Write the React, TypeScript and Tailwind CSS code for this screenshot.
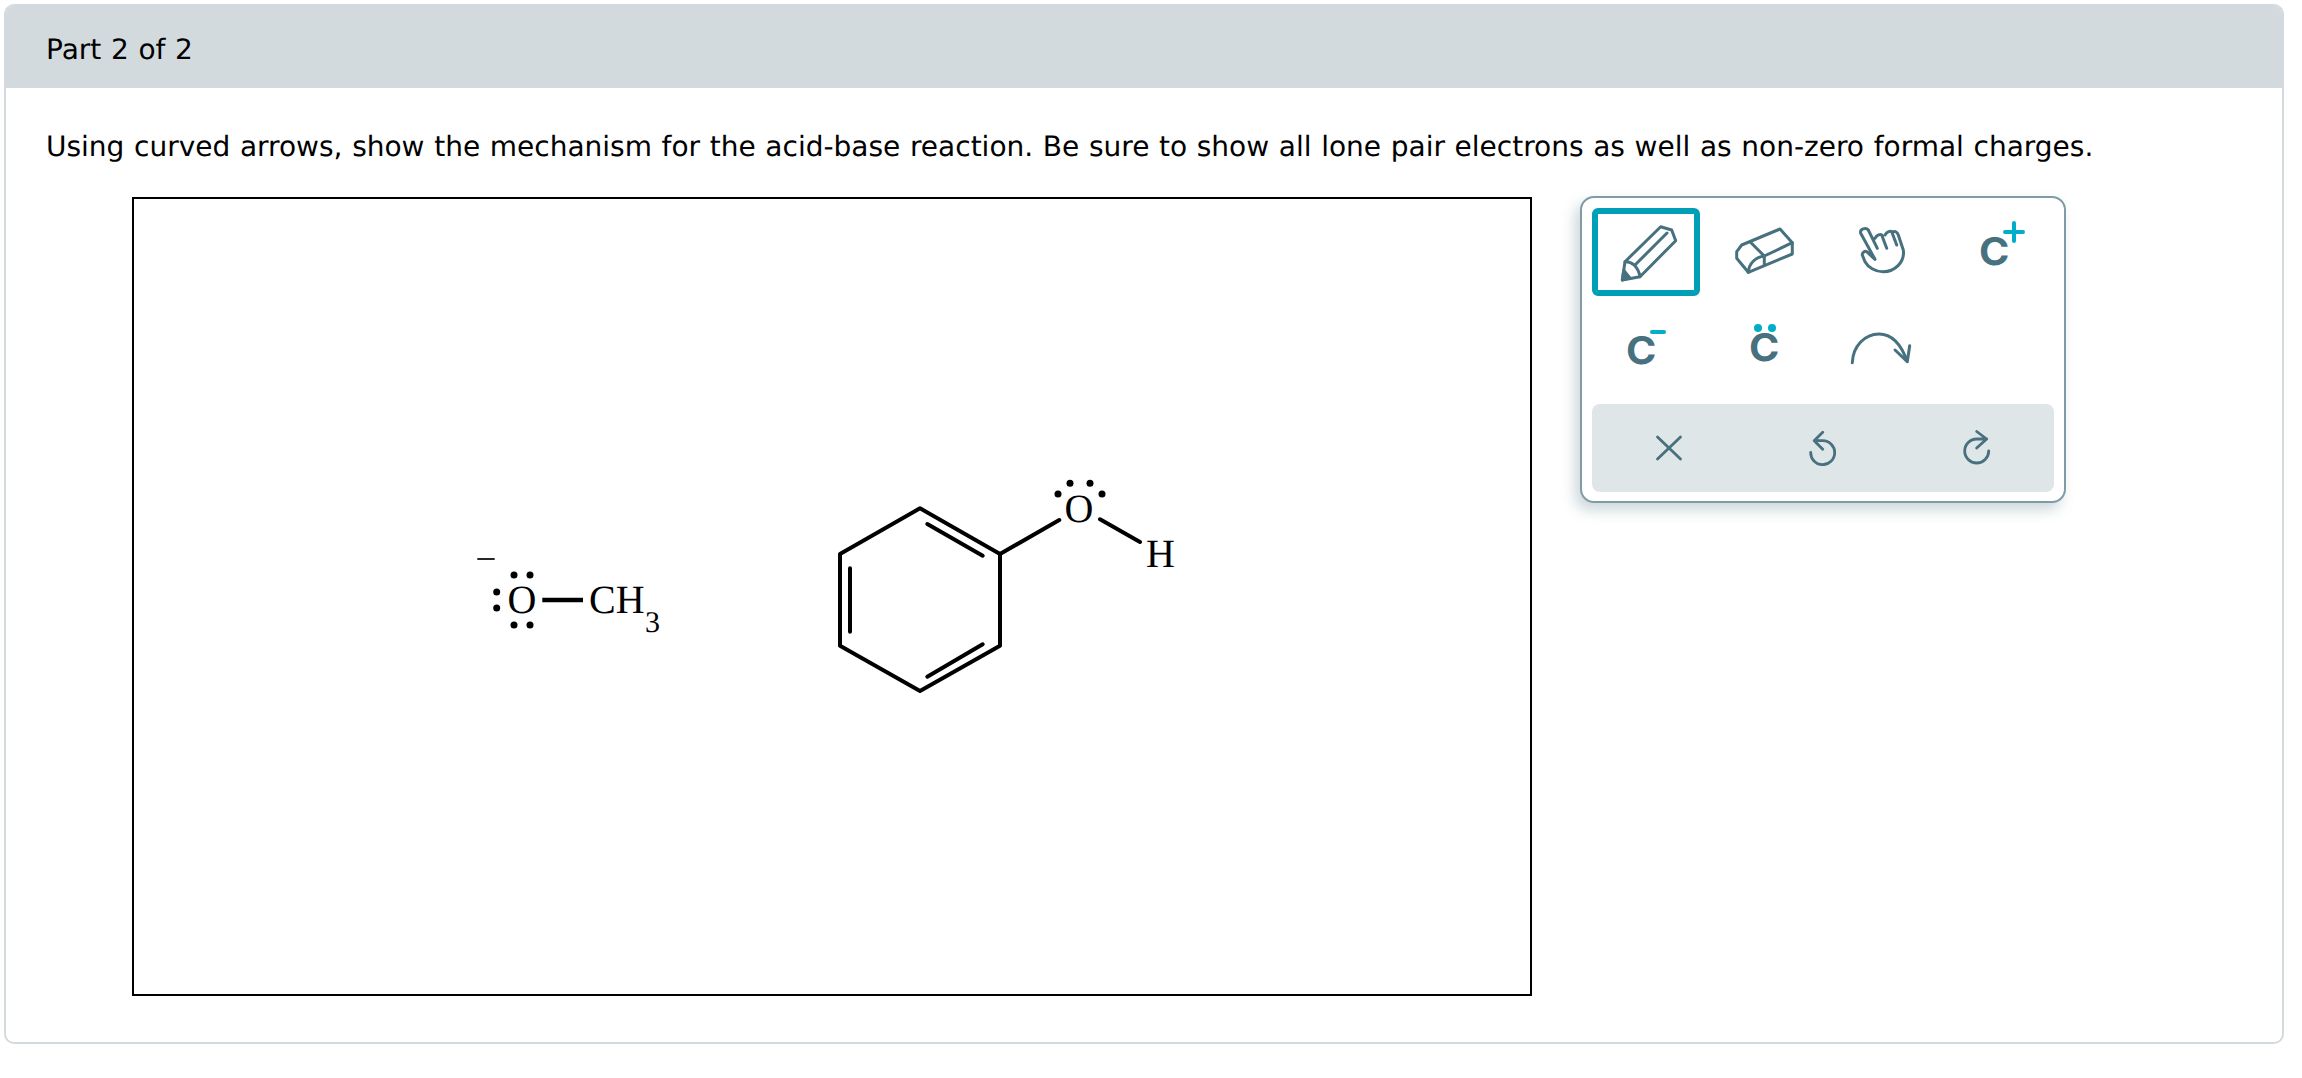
import type { ReactNode } from "react";

const TEAL = "#47717f";
const CYAN = "#00aec9";

function Icon({ children }: { children: ReactNode }) {
  return (
    <svg width="64" height="64" viewBox="0 0 64 64" fill="none" stroke={TEAL} strokeWidth="3" strokeLinecap="round" strokeLinejoin="round">
      {children}
    </svg>
  );
}

function Carbon({ className }: { className?: string }) {
  return (
    <span className={"font-['Inter',sans-serif] text-[38px] leading-none font-bold scale-x-[1.08] text-[#47717f] " + (className || "")}>C</span>
  );
}

function Tool({ active, children }: { active?: boolean; children: ReactNode }) {
  return (
    <div className={"relative h-[88px] flex items-center justify-center rounded-[6px] " + (active ? "border-[6px] border-[#009fb8]" : "")}>
      {children}
    </div>
  );
}

export default function App() {
  return (
    <div className="p-[4px] bg-white font-['DejaVu_Sans',sans-serif] text-black [text-rendering:geometricPrecision] [word-spacing:0.75px]">
      <div className="w-[2280px] h-[1040px] rounded-[10px] border-2 border-[#d2dadd] overflow-hidden">
        <div className="h-[82px] bg-[#d2dadd] flex items-center pl-[40px] pt-[6px] text-[28px]">Part 2 of 2</div>
        <div className="pl-[40px] pt-[42px] text-[28px] leading-[34px]">
          Using curved arrows, show the mechanism for the acid-base reaction. Be sure to show all lone pair electrons as well as non-zero formal charges.
        </div>
        <div className="flex items-start pl-[126px] mt-[33px]">
          {/* drawing area */}
          <div className="w-[1400px] h-[799px] border-2 border-black">
            <svg className="block w-full h-full" viewBox="134 199 1396 795">
              <g stroke="#000" strokeWidth="4" fill="none" strokeLinecap="round" strokeLinejoin="round">
                <path d="M920 508.3L1000 554V645.7L920 691L840 645.7V554Z" />
                <path d="M927.3 524L982.7 555.7M850 568.3V631.7M927.3 676.7L982.7 644.3" />
                <path d="M1000 554L1059.3 520M1100 519.3L1140 542" />
                <path d="M542.3 600H583" strokeWidth="4.5" strokeLinecap="butt" />
                <path d="M477.3 559H494.7" strokeWidth="1.7" strokeLinecap="butt" />
              </g>
              <g fill="#000" fontFamily="'Liberation Serif', serif" fontSize="40">
                <text x="1064.6" y="521.7">O</text>
                <text x="1146" y="566.7">H</text>
                <text x="507.6" y="613.3">O</text>
                <text x="589" y="613.3">CH</text>
                <text x="645" y="631.7" fontSize="30">3</text>
                <circle cx="1058" cy="494" r="3.5" />
                <circle cx="1070" cy="483.3" r="3.5" />
                <circle cx="1090" cy="483.3" r="3.5" />
                <circle cx="1102" cy="494" r="3.5" />
                <circle cx="514" cy="575" r="3.5" />
                <circle cx="530" cy="575" r="3.5" />
                <circle cx="514" cy="625" r="3.5" />
                <circle cx="530" cy="625" r="3.5" />
                <circle cx="496.7" cy="592" r="3.5" />
                <circle cx="496.7" cy="608" r="3.5" />
              </g>
            </svg>
          </div>

          {/* tool palette */}
          <div className="ml-[48px] -mt-px w-[486px] h-[307px] rounded-[14px] border-2 border-[#7f9ca6] bg-white p-[10px] shadow-[-5px_7px_14px_rgba(71,113,127,0.28)]">
            <div className="grid grid-cols-4 gap-x-[10px] gap-y-[12px]">
              <Tool active>
                <Icon>
                  <path d="M46.7 6.7L57.7 10L61.7 20.7L26 56.7L8.3 60L11 41.7Z" />
                  <path d="M11 41.7C17 41 24 46 26 56.7M21 45L53 13" />
                  <path d="M8.3 60L9.8 50.5L15.5 57.5Z" fill={TEAL} />
                </Icon>
              </Tool>
              <Tool>
                <Icon>
                  <path d="M48 9L60.3 22.7V34L16.3 52.3L4.7 38.3V31.7L9.7 25Z" />
                  <path d="M19 22.7L32.3 36L60.3 22.7M32.3 36V45M32.3 36C24 37 17 43 16.3 52.3" />
                </Icon>
              </Tool>
              <Tool>
                <Icon>
                  <path d="M25 39.3L10.7 13.3C9.5 9 16 7 18.3 10L27.3 28.3M25 18.3C27 14.5 30.5 14 31.7 15L36.7 28.3M35 15C37 11.5 40.5 10.5 41.7 11.7L46.7 25M43.3 11.7C45.5 11 47.5 12.5 48.3 15L53.3 30C55 42 45 51.7 33 51.7C25 51.7 18 47 15 41.7L12.3 35C12 32.5 15 30.5 16.7 31.7L25 39.3" />
                </Icon>
              </Tool>
              <Tool>
                <Carbon className="-ml-[12px]" />
                <svg className="absolute left-[57px] top-[13px]" width="22" height="22" viewBox="0 0 22 22" stroke={CYAN} strokeWidth="4" strokeLinecap="round">
                  <path d="M2 11H20M11 2V20" />
                </svg>
              </Tool>
              <Tool>
                <Carbon className="-ml-[10px] -mt-[2px]" />
                <span className="absolute left-[58px] top-[22px] w-[16px] h-[4px] rounded-full bg-[#00aec9]" />
              </Tool>
              <Tool>
                <Carbon className="-mt-[8px]" />
                <span className="absolute left-[44px] top-[16px] w-[8px] h-[8px] rounded-full bg-[#00aec9]" />
                <span className="absolute left-[58px] top-[16px] w-[8px] h-[8px] rounded-full bg-[#00aec9]" />
              </Tool>
              <Tool>
                <Icon>
                  <path d="M2.3 42.7C3 26 15 14 29 14C40 14 50 21 57.3 41.7M59.7 25.7L57.3 41.7L45 30" />
                </Icon>
              </Tool>
              <Tool>{null}</Tool>
            </div>
            <div className="mt-[8px] h-[88px] rounded-[8px] bg-[#dfe6e8] grid grid-cols-3">
              <div className="flex items-center justify-center">
                <svg width="28" height="28" viewBox="0 0 28 28" fill="none" stroke={TEAL} strokeWidth="2.8" strokeLinecap="round">
                  <path d="M2.5 3L25.5 25M25.5 3L2.5 25" />
                </svg>
              </div>
              <div className="flex items-center justify-center">
                <svg width="32" height="36" viewBox="0 0 32 36" fill="none" stroke={TEAL} strokeWidth="2.8" strokeLinecap="round" strokeLinejoin="round">
                  <path d="M7.2 10.7H15.7A12 12 0 1 1 3.7 22.3M15.7 2.3L7.2 10.7L15.7 19.3" />
                </svg>
              </div>
              <div className="flex items-center justify-center">
                <svg width="32" height="36" viewBox="0 0 32 36" fill="none" stroke={TEAL} strokeWidth="2.8" strokeLinecap="round" strokeLinejoin="round">
                  <path d="M27.7 21A12 12 0 1 1 15.7 9H25.7M15.7 1.5L25.7 9L15.7 18" />
                </svg>
              </div>
            </div>
          </div>
        </div>
      </div>
    </div>
  );
}
